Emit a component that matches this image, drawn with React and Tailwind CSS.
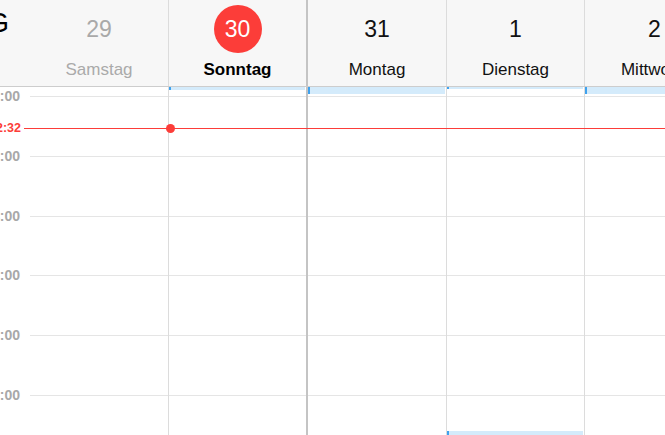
import React from 'react';

const days = [
  { num: '29', name: 'Samstag', muted: true, border: 'border-r border-[#dcdcdc]', width: 'w-[139px]' },
  { num: '30', name: 'Sonntag', today: true, border: 'border-r-2 border-[#c4c4c4]', width: 'w-[139px]' },
  { num: '31', name: 'Montag', border: 'border-r border-[#dcdcdc]', width: 'w-[139px]' },
  { num: '1', name: 'Dienstag', border: 'border-r border-[#dcdcdc]', width: 'w-[138px]' },
  { num: '2', name: 'Mittwoch', border: '', width: 'w-[139px]' },
];

const hours = ['12:00', '13:00', '14:00', '15:00', '16:00', '17:00'];

const Event = ({ className }) => (
  <div className={`absolute left-0 right-px flex bg-[#d4ebfb] ${className}`}>
    <div className="w-[2px] h-full bg-[#3fa2ee]" />
  </div>
);

const DayHeader = ({ day }) => (
  <div className={`${day.width} shrink-0 flex flex-col items-center ${day.border}`}>
    <div className="mt-[5px] h-[48px] flex items-center justify-center">
      {day.today ? (
        <div className="w-[48px] h-[48px] rounded-full bg-[#fc3d39] text-white text-[23px] leading-[48px] text-center">
          {day.num}
        </div>
      ) : (
        <span className={`text-[23px] leading-[48px] ${day.muted ? 'text-[#a9a9a9]' : 'text-[#111]'}`}>{day.num}</span>
      )}
    </div>
    <div
      className={`mt-[7px] h-[20px] text-[17px] leading-[20px] whitespace-nowrap ${
        day.today ? 'font-bold text-black' : day.muted ? 'text-[#aaaaaa]' : 'text-[#111]'
      }`}
    >
      {day.name}
    </div>
  </div>
);

export default function App() {
  return (
    <div className="w-[665px] h-[435px] overflow-hidden bg-white flex flex-col" style={{ fontFamily: '"Liberation Sans", Arial, sans-serif' }}>
      {/* Header */}
      <div className="h-[87px] shrink-0 flex bg-[#f7f7f7] border-b border-[#cdcdcd]">
        <div className="w-[30px] shrink-0 flex justify-end pr-[21px]">
          <span className="mt-[7px] text-[28px] leading-[32px] text-black whitespace-nowrap">AUG</span>
        </div>
        {days.map((d) => (
          <DayHeader key={d.name} day={d} />
        ))}
      </div>

      {/* Time grid */}
      <div className="relative flex-1 overflow-hidden">
        <div className="pt-[9px]">
          {hours.map((h) => (
            <div key={h} className="flex h-[59.8px]">
              <div className="w-[30px] shrink-0 relative">
                <div className="absolute right-[10px] -top-[9px] h-[18px] flex justify-end">
                  <span className="text-[14px] leading-[18px] font-bold text-[#a8a8a8] whitespace-nowrap">{h}</span>
                </div>
              </div>
              <div className="flex-1 border-t border-[#e5e5e5]" />
            </div>
          ))}
        </div>

        {/* day columns */}
        <div className="absolute inset-y-0 left-[30px] right-0 flex">
          {days.map((d, i) => (
            <div key={d.name} className={`${d.width} shrink-0 relative ${d.border}`}>
              {i === 1 && <Event className="top-0 h-[3px]" />}
              {i === 2 && <Event className="top-0 h-[7px]" />}
              {i === 3 && <Event className="top-0 h-[2px]" />}
              {i === 3 && <Event className="top-[344px] h-[10px]" />}
              {i === 4 && <Event className="top-0 h-[7px]" />}
            </div>
          ))}
        </div>

        {/* now line */}
        <div className="absolute left-0 right-0 top-[33px] h-[16px] flex items-center">
          <div className="w-[24px] shrink-0 flex justify-end pr-[3px]">
            <span className="text-[12.5px] leading-[16px] font-bold text-[#fc3d39] whitespace-nowrap">12:32</span>
          </div>
          <div className="flex-1 h-px bg-[#fc3d39] relative">
            <div className="absolute left-[142px] -top-[4px] w-[9px] h-[9px] rounded-full bg-[#fc3d39]" />
          </div>
        </div>
      </div>
    </div>
  );
}
